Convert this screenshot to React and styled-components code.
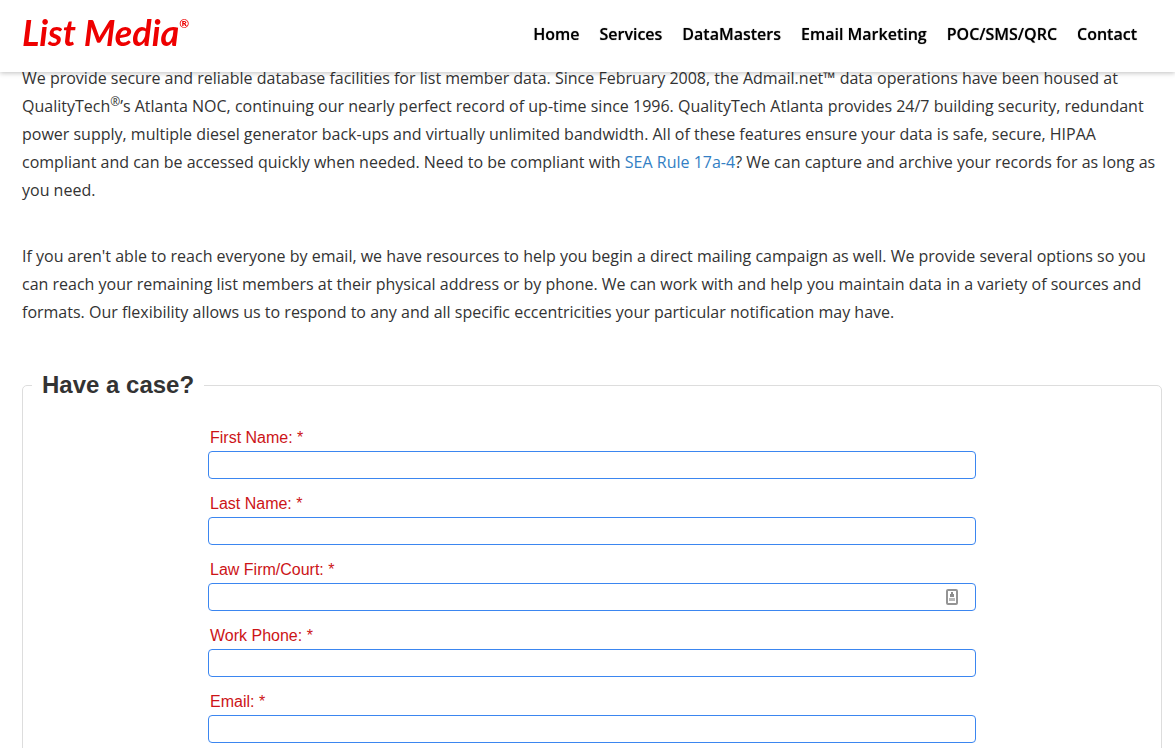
import React from "react";
import styled, { createGlobalStyle } from "styled-components";

const GlobalStyle = createGlobalStyle`
  * { box-sizing: border-box; }
  body {
    margin: 0;
    background: #fff;
    color: #333;
    font-family: "Open Sans", "Noto Sans", sans-serif;
    font-size: 16px;
    line-height: 28px;
  }
`;

const Page = styled.div`
  height: 100vh;
  overflow-y: auto;
  scrollbar-width: none;
`;

const Header = styled.header`
  position: fixed;
  top: 0;
  left: 0;
  right: 0;
  z-index: 2;
  display: flex;
  align-items: center;
  justify-content: space-between;
  height: 72px;
  padding: 0 38px 4px 22px;
  background: #fff;
  box-shadow: 0 1px 5px rgba(0, 0, 0, 0.25);
`;

const Logo = styled.a`
  display: flex;
  align-items: flex-start;
  padding-bottom: 4px;
  color: #ee0000;
  font-family: Lato, sans-serif;
  font-size: 36px;
  font-style: italic;
  font-weight: 700;
  line-height: 36px;
  text-decoration: none;
  white-space: nowrap;
`;

const LogoMark = styled.span`
  font-size: 12px;
  font-style: normal;
  line-height: 20px;
`;

const Nav = styled.nav`
  display: flex;
  gap: 20px;
`;

const NavLink = styled.a`
  color: #000;
  font-size: 16px;
  font-weight: 600;
  text-decoration: none;
  text-shadow: 0 0 1px rgba(0, 0, 0, 0.6);
  white-space: nowrap;
`;

const Main = styled.main`
  padding: 64px 13px 0 22px;
`;

const Paragraph = styled.p`
  margin: 0 0 38px;
`;

const Sup = styled.sup`
  position: relative;
  top: -6px;
  font-size: 12px;
  line-height: 0;
  vertical-align: baseline;
`;

const TextLink = styled.a`
  color: #337fc4;
  text-decoration: none;
`;

const Fieldset = styled.fieldset`
  min-width: 0;
  margin: 42px 0 0;
  padding: 24px 9px 48px;
  border: 1px solid #ddd;
  border-radius: 5px;
`;

const Legend = styled.legend`
  padding: 0 10px;
  font-family: "Liberation Sans", Arial, sans-serif;
  font-size: 24px;
  font-weight: 700;
  line-height: 34px;
`;

const Form = styled.form`
  display: flex;
  flex-direction: column;
  gap: 13px;
  width: 768px;
  max-width: 100%;
  margin: 0 auto;
`;

const Field = styled.div`
  position: relative;
  display: flex;
  flex-direction: column;
  gap: 1px;
`;

const Label = styled.label`
  padding-left: 2px;
  color: #cc1417;
  font-family: "Liberation Sans", Arial, sans-serif;
  line-height: 24px;
`;

const Input = styled.input`
  width: 100%;
  height: 28px;
  padding: 0 8px;
  border: 1px solid #3b86f0;
  border-radius: 4px;
  background: #fff;
  font: inherit;
`;

const ContactIcon = styled.svg`
  position: absolute;
  right: 18px;
  bottom: 6px;
`;

const links = ["Home", "Services", "DataMasters", "Email Marketing", "POC/SMS/QRC", "Contact"];

const fields = [
  { id: "first-name", label: "First Name: *" },
  { id: "last-name", label: "Last Name: *" },
  { id: "firm", label: "Law Firm/Court: *", contact: true },
  { id: "phone", label: "Work Phone: *", type: "tel" },
  { id: "email", label: "Email: *", type: "email" },
];

export default function App() {
  return (
    <Page>
      <GlobalStyle />
      <Header>
        <Logo href="#">
          List Media<LogoMark>®</LogoMark>
        </Logo>
        <Nav>
          {links.map((name) => (
            <NavLink key={name} href="#">{name}</NavLink>
          ))}
        </Nav>
      </Header>
      <Main>
        <Paragraph>
          We provide secure and reliable database facilities for list member data. Since February
          2008, the Admail.net™ data operations have been housed at QualityTech<Sup>®</Sup>’s
          Atlanta NOC, continuing our nearly perfect record of up-time since 1996. QualityTech
          Atlanta provides 24/7 building security, redundant power supply, multiple diesel
          generator back-ups and virtually unlimited bandwidth. All of these features ensure your
          data is safe, secure, HIPAA compliant and can be accessed quickly when needed. Need to be
          compliant with <TextLink href="#">SEA Rule 17a-4</TextLink>? We can capture and archive
          your records for as long as you need.
        </Paragraph>
        <Paragraph>
          If you aren't able to reach everyone by email, we have resources to help you begin a
          direct mailing campaign as well. We provide several options so you can reach your
          remaining list members at their physical address or by phone. We can work with and help
          you maintain data in a variety of sources and formats. Our flexibility allows us to
          respond to any and all specific eccentricities your particular notification may have.
        </Paragraph>
        <Fieldset>
          <Legend>Have a case?</Legend>
          <Form>
            {fields.map(({ id, label, type = "text", contact }) => (
              <Field key={id}>
                <Label htmlFor={id}>{label}</Label>
                <Input id={id} type={type} />
                {contact && (
                  <ContactIcon width="12" height="16" viewBox="0 0 12 16" aria-hidden="true">
                    <rect x="1" y="1" width="10" height="14" rx="1" fill="#fff" stroke="#949494" strokeWidth="2" />
                    <rect x="5" y="3" width="2" height="3" fill="#8c8c8c" />
                    <rect x="4" y="5" width="4" height="3" fill="#8c8c8c" />
                    <rect x="3" y="9" width="6" height="3" fill="#b8b8b8" />
                  </ContactIcon>
                )}
              </Field>
            ))}
          </Form>
        </Fieldset>
      </Main>
    </Page>
  );
}
